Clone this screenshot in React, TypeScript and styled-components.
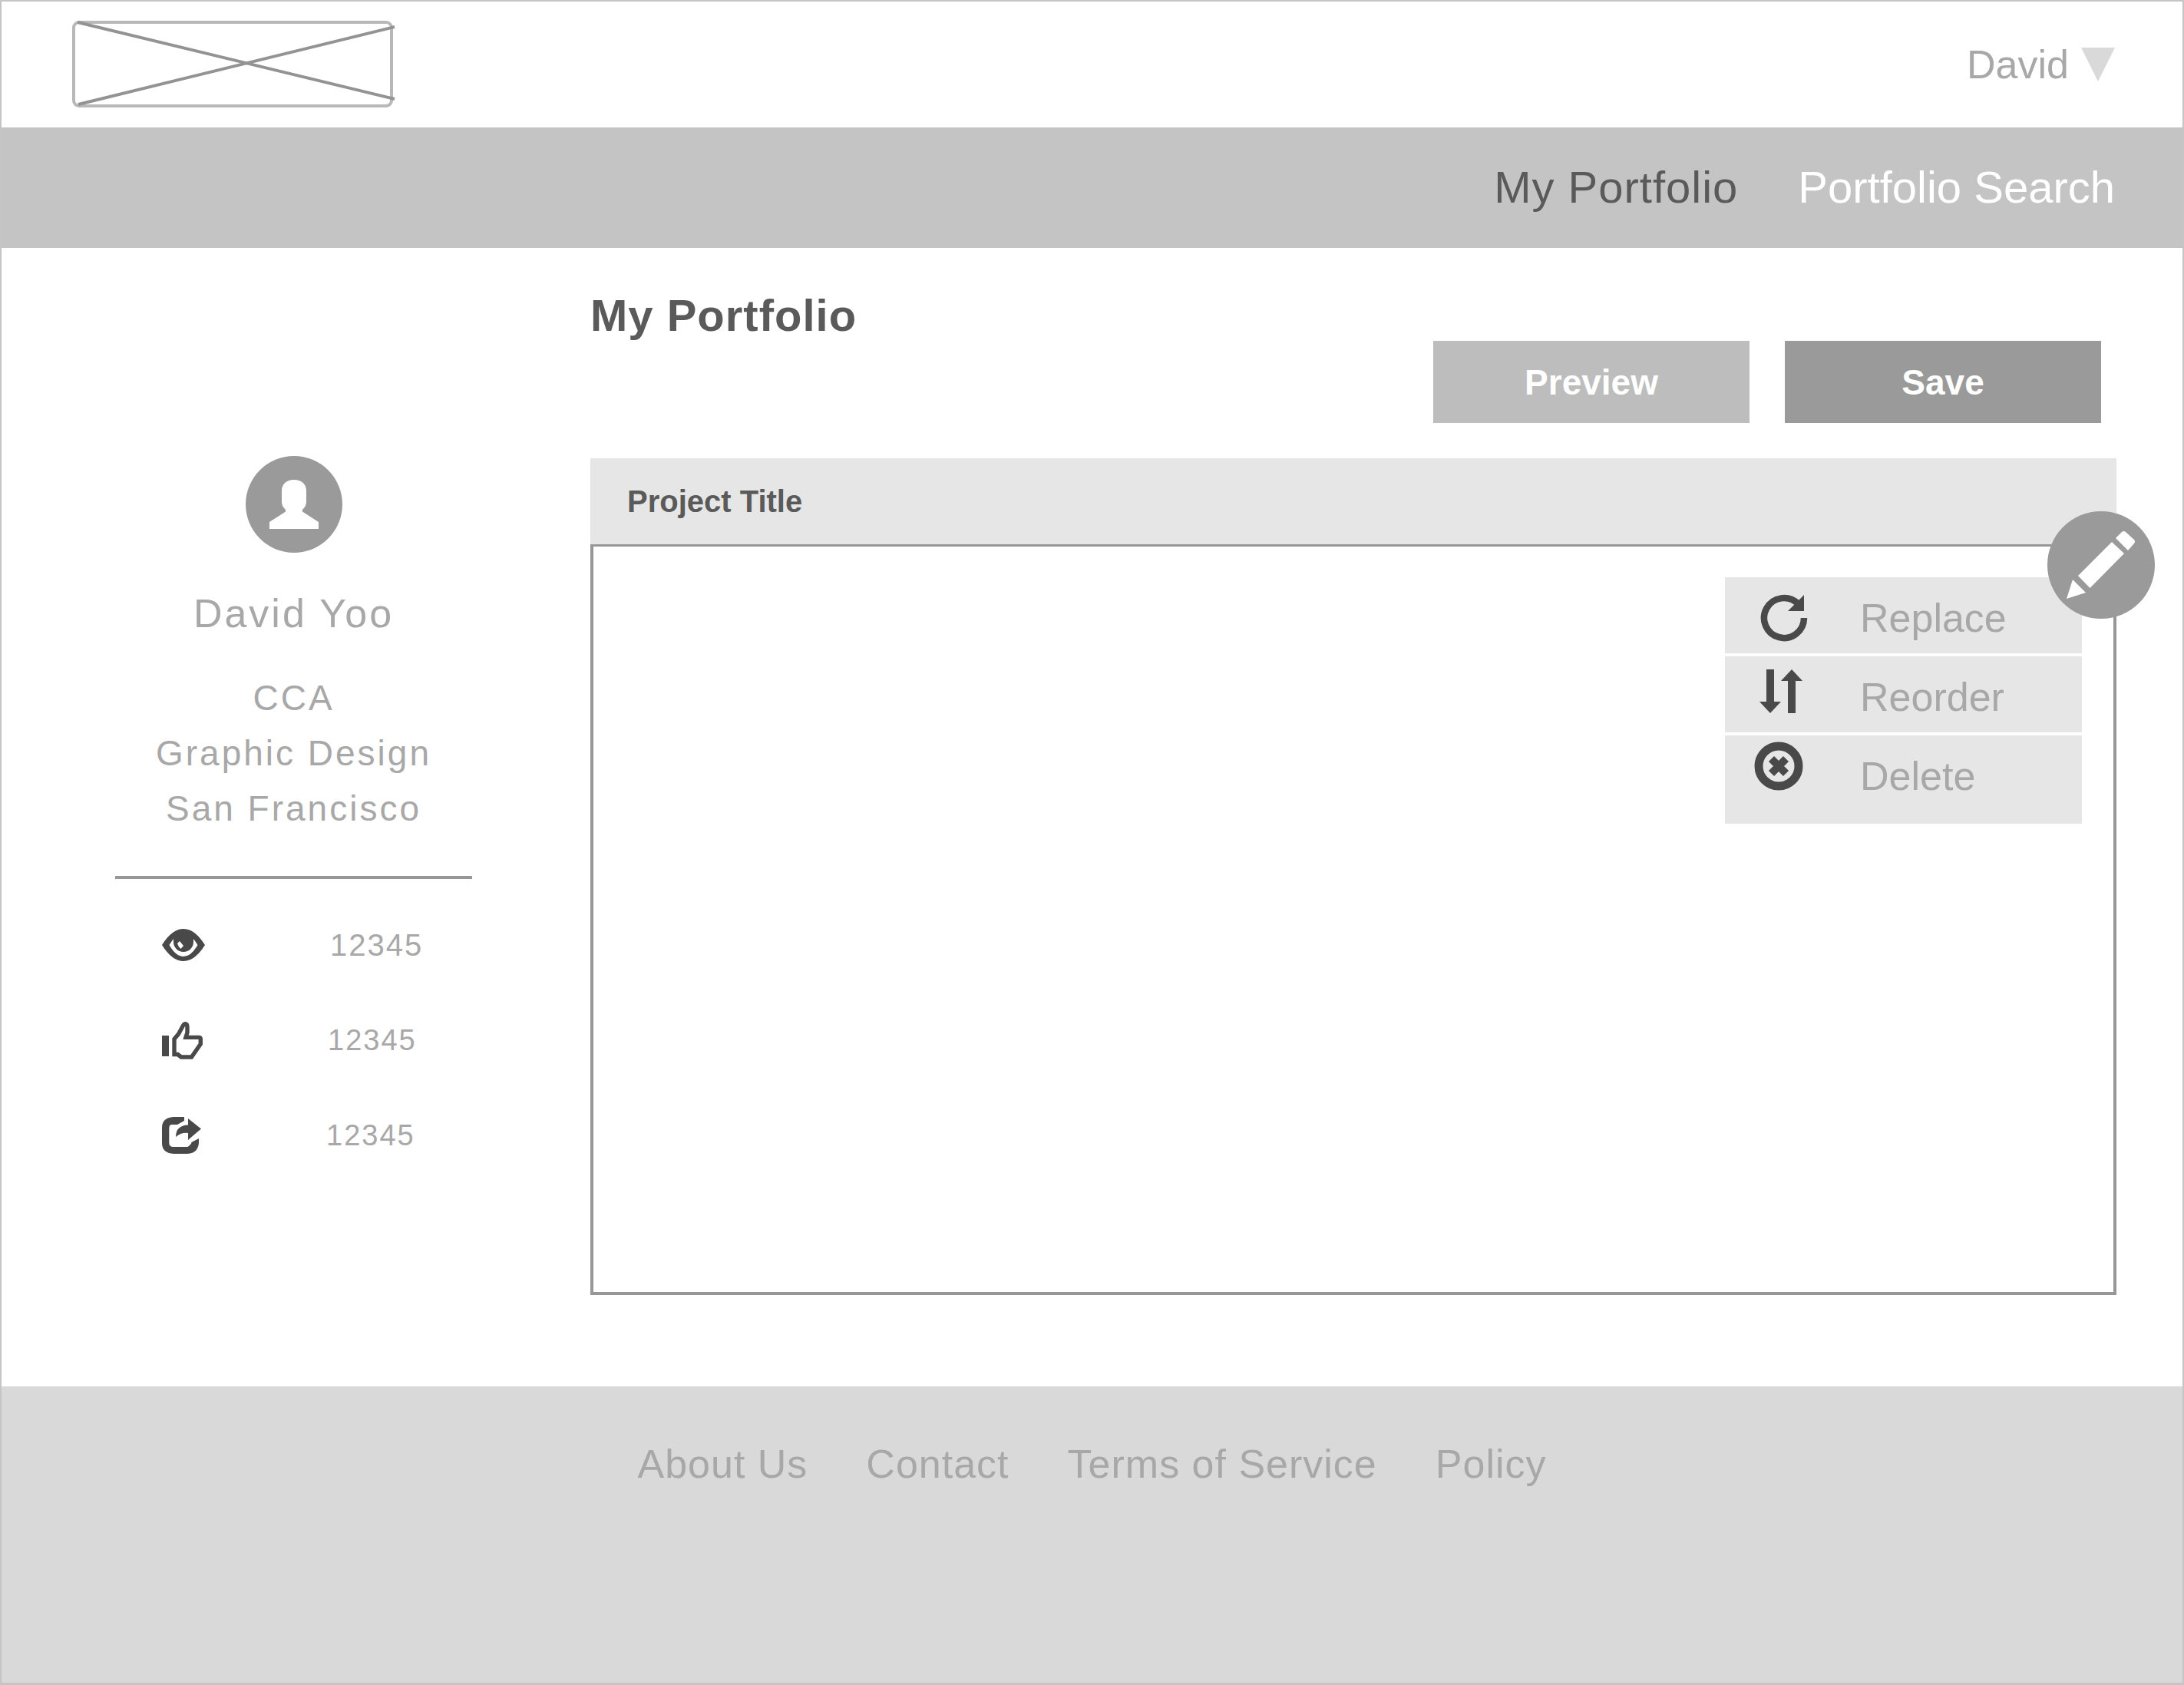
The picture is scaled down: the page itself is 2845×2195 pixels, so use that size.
import React from "react";
import styled, { createGlobalStyle } from "styled-components";

const color = {
  frame: "#c5c5c5",
  bar: "#c4c4c4",
  footer: "#d9d9d9",
  panel: "#e6e6e6",
  line: "#979797",
  solid: "#9a9a9a",
  soft: "#bdbdbd",
  ink: "#5a5a5a",
  icon: "#494949",
  muted: "#a8a8a8",
  white: "#ffffff",
};

const GlobalStyle = createGlobalStyle`
  *, *::before, *::after { box-sizing: border-box; }
  body {
    margin: 0;
    background: ${color.white};
    font-family: "Liberation Sans", Arial, Helvetica, sans-serif;
  }
  button, a { font: inherit; color: inherit; text-decoration: none; }
  button { border: 0; padding: 0; background: none; cursor: pointer; }
  h1, h2, p, ul { margin: 0; padding: 0; }
  ul { list-style: none; }
  svg { display: block; flex: none; }
`;

const Page = styled.div`
  display: flex;
  flex-direction: column;
  min-height: 100vh;
  border: 2px solid ${color.frame};
  border-bottom-width: 3px;
`;

const Header = styled.header`
  display: flex;
  align-items: center;
  justify-content: space-between;
  padding: 25px 88px 25px 92px;
`;

const UserMenu = styled.button`
  display: flex;
  align-items: center;
  gap: 16px;
  font-size: 52px;
  line-height: 60px;
  color: ${color.muted};
`;

const NavBar = styled.nav`
  display: flex;
  justify-content: flex-end;
  gap: 78px;
  padding: 46px 88px 47px;
  background: ${color.bar};
`;

const NavLink = styled.a<{ $active?: boolean }>`
  font-size: 58px;
  line-height: 64px;
  letter-spacing: ${(p) => (p.$active ? "1px" : "normal")};
  color: ${(p) => (p.$active ? color.ink : color.white)};
`;

const Main = styled.main`
  display: grid;
  grid-template-columns: 465px minmax(0, 1fr);
  column-gap: 154px;
  padding: 56px 86px 119px 148px;
`;

const Profile = styled.aside`
  display: flex;
  flex-direction: column;
  padding-top: 215px;
  color: ${color.muted};
`;

const Avatar = styled.div`
  display: flex;
  justify-content: center;
`;

const Name = styled.h2`
  margin-top: 49px;
  font-size: 52px;
  font-weight: 400;
  line-height: 60px;
  letter-spacing: 3px;
  text-align: center;
`;

const Details = styled.div`
  margin-top: 44px;
  padding-bottom: 52px;
  border-bottom: 4px solid ${color.line};
  font-size: 46px;
  line-height: 72px;
  letter-spacing: 3px;
  text-align: center;
`;

const Stats = styled.ul`
  display: flex;
  flex-direction: column;
  gap: 76px;
  padding: 62px 0 0 61px;
`;

const Stat = styled.li`
  display: flex;
  align-items: center;
  gap: 163px;
  height: 48px;
  font-size: 38px;
  line-height: 48px;
  letter-spacing: 2px;

  &:first-child {
    font-size: 40px;
  }
`;

const Title = styled.h1`
  font-size: 58px;
  line-height: 64px;
  letter-spacing: 1px;
  color: ${color.ink};
`;

const Actions = styled.div`
  display: flex;
  justify-content: flex-end;
  gap: 46px;
  padding: 1px 20px 46px;
`;

const ActionButton = styled.button<{ $primary?: boolean }>`
  width: 412px;
  height: 107px;
  font-size: 46px;
  font-weight: 700;
  color: ${color.white};
  background: ${(p) => (p.$primary ? color.solid : color.soft)};
`;

const ProjectTitle = styled.h2`
  padding: 32px 48px;
  font-size: 40px;
  line-height: 48px;
  color: ${color.ink};
  background: ${color.panel};
`;

const Canvas = styled.div`
  position: relative;
  min-height: 978px;
  border: 4px solid ${color.line};
  border-top-width: 3px;
`;

const EditMenu = styled.ul`
  position: absolute;
  top: 40px;
  right: 41px;
  display: flex;
  flex-direction: column;
  gap: 4px;
  width: 465px;
`;

const MenuItem = styled.li`
  background: ${color.panel};

  &:last-child {
    padding-bottom: 16px;
  }
`;

const MenuButton = styled.button`
  display: flex;
  align-items: flex-start;
  gap: 68px;
  width: 100%;
  padding-left: 36px;
  font-size: 52px;
  line-height: 60px;
  color: ${color.muted};
`;

const MenuLabel = styled.span`
  padding: 23px 0 16px;
`;

const EditButton = styled.button`
  position: absolute;
  top: -46px;
  right: -54px;
`;

const Footer = styled.footer`
  display: flex;
  flex: 1;
  justify-content: center;
  align-items: flex-start;
  gap: 76px;
  padding: 71px 88px;
  font-size: 52px;
  line-height: 60px;
  letter-spacing: 1px;
  color: ${color.muted};
  background: ${color.footer};
`;

const Logo = () => (
  <svg width="422" height="114" viewBox="0 0 422 114" fill="none" role="img" aria-label="Logo">
    <rect x="2" y="2" width="414" height="109" rx="7" stroke="#b8b8b8" strokeWidth="4" />
    <path d="M7 2L420 102M8 109L420 8" stroke="#939393" strokeWidth="4" />
  </svg>
);

const Caret = () => (
  <svg width="44" height="44" viewBox="0 0 44 44" fill={color.footer} aria-hidden="true">
    <path d="M0 0H44L22 44Z" />
  </svg>
);

const AvatarIcon = () => (
  <svg width="126" height="126" viewBox="0 0 126 126" role="img" aria-label="Profile picture">
    <circle cx="63" cy="63" r="63" fill={color.solid} />
    <path
      fill={color.white}
      d="M63 31C53 31 47 37 47 45V60C47 64 49 67 52 70V72.5L31 86V95H95V86L74 72.5V70C77 67 79 64 79 60V45C79 37 73 31 63 31Z"
    />
  </svg>
);

const EyeIcon = () => (
  <svg width="56" height="42" viewBox="0 0 56 42" aria-hidden="true">
    <path fill={color.icon} d="M0 21Q13 0 28 0T56 21Q43 42 28 42T0 21Z" />
    <path
      fill={color.white}
      d="M15 13Q12 17 9.500 21Q18 36 28 36T46.500 21Q44 17 41 13V17A13 13 0 0 1 15 17Z"
    />
    <path fill={color.white} d="M20 19L23 16L28 22L24.500 26Q21 23 20 19Z" />
  </svg>
);

const ThumbIcon = () => (
  <svg width="53" height="49" viewBox="0 0 53 49" aria-hidden="true">
    <path fill={color.icon} d="M0 18H9V45H0Z" />
    <path
      fill="none"
      stroke={color.icon}
      strokeWidth="5.400"
      d="M16 22.500L21.500 16L27.500 5Q28.800 2.700 30.500 2.700Q33 3 33 7V14L31 20.400H48Q50.300 20.400 50.300 22.500V29L38.500 46H25L20.500 42.500H16Z"
    />
  </svg>
);

const ShareIcon = () => (
  <svg width="51" height="48" viewBox="0 0 51 48" fill={color.icon} aria-hidden="true">
    <path d="M29 0H15Q0 1 0 14V34Q0 47 15 48H33Q47 47 48 34V28L38.500 33Q38 36 33.500 39H15Q9.300 39 9.300 34V15Q9.300 10 13 10H20L29 5Z" />
    <path d="M34 2L51 15.500L34 30V21Q25 20 18 26Q18 11 34 10.500Z" />
  </svg>
);

const ReplaceIcon = () => (
  <svg width="72" height="84" viewBox="0 0 72 84" aria-hidden="true">
    <path fill="none" stroke={color.icon} strokeWidth="8.500" d="M67 53A26 26 0 1 1 59 34.300" />
    <path fill={color.icon} d="M67 23V44H46Z" />
  </svg>
);

const ReorderIcon = () => (
  <svg width="72" height="84" viewBox="0 0 72 84" fill={color.icon} aria-hidden="true">
    <path d="M18 17H28V59H37L23 74L9 59H18Z" />
    <path d="M51 17L65 32H56V74H46V32H37Z" />
  </svg>
);

const DeleteIcon = () => (
  <svg width="72" height="84" viewBox="0 0 72 84" fill="none" stroke={color.icon} aria-hidden="true">
    <circle cx="34" cy="40" r="26" strokeWidth="11" />
    <path d="M24.500 30.500L43.500 49.500M43.500 30.500L24.500 49.500" strokeWidth="10" />
  </svg>
);

const PencilIcon = () => (
  <svg width="140" height="140" viewBox="0 0 140 140" aria-hidden="true">
    <circle cx="70" cy="70" r="70" fill={color.solid} />
    <g fill={color.white}>
      <path d="M25 114L33 89L50 106Z" />
      <path d="M84 40L100 55L55.500 100L40 84Z" />
      <path d="M89 35L97 27Q99.500 25 102 27L113 37Q115 39.500 113 42L105 51Z" />
    </g>
  </svg>
);

const stats = [
  { label: "Views", value: "12345", Icon: EyeIcon },
  { label: "Likes", value: "12345", Icon: ThumbIcon },
  { label: "Shares", value: "12345", Icon: ShareIcon },
];

const menu = [
  { label: "Replace", Icon: ReplaceIcon },
  { label: "Reorder", Icon: ReorderIcon },
  { label: "Delete", Icon: DeleteIcon },
];

const footerLinks = ["About Us", "Contact", "Terms of Service", "Policy"];

export default function App() {
  return (
    <>
      <GlobalStyle />
      <Page>
        <Header>
          <Logo />
          <UserMenu type="button">
            David
            <Caret />
          </UserMenu>
        </Header>
        <NavBar>
          <NavLink href="#portfolio" $active aria-current="page">
            My Portfolio
          </NavLink>
          <NavLink href="#search">Portfolio Search</NavLink>
        </NavBar>
        <Main>
          <Profile>
            <Avatar>
              <AvatarIcon />
            </Avatar>
            <Name>David Yoo</Name>
            <Details>
              <p>CCA</p>
              <p>Graphic Design</p>
              <p>San Francisco</p>
            </Details>
            <Stats>
              {stats.map(({ label, value, Icon }) => (
                <Stat key={label} title={label}>
                  <Icon />
                  <span>{value}</span>
                </Stat>
              ))}
            </Stats>
          </Profile>
          <section>
            <Title>My Portfolio</Title>
            <Actions>
              <ActionButton type="button">Preview</ActionButton>
              <ActionButton type="button" $primary>
                Save
              </ActionButton>
            </Actions>
            <ProjectTitle>Project Title</ProjectTitle>
            <Canvas>
              <EditMenu>
                {menu.map(({ label, Icon }) => (
                  <MenuItem key={label}>
                    <MenuButton type="button">
                      <Icon />
                      <MenuLabel>{label}</MenuLabel>
                    </MenuButton>
                  </MenuItem>
                ))}
              </EditMenu>
              <EditButton type="button" aria-label="Edit project">
                <PencilIcon />
              </EditButton>
            </Canvas>
          </section>
        </Main>
        <Footer>
          {footerLinks.map((label) => (
            <a key={label} href="#footer">
              {label}
            </a>
          ))}
        </Footer>
      </Page>
    </>
  );
}
